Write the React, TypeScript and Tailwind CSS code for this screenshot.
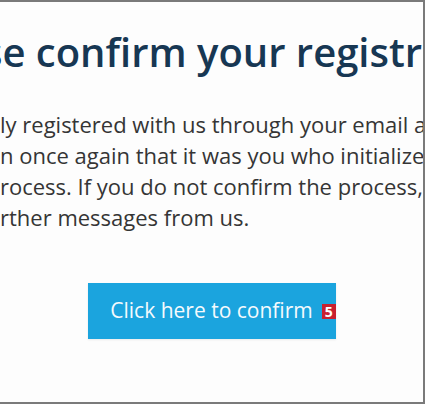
import React from "react";

export default function App() {
  return (
    <div className="w-[425px] h-[404px] overflow-hidden bg-[#fdfdfd] border-t-2 border-r-2 border-b-2 border-[#7a7a7a] flex flex-col" style={{ fontFamily: '"Open Sans", "Noto Sans", sans-serif' }}>
      <div className="flex justify-center overflow-hidden pt-[22px]">
        <h1 className="whitespace-nowrap text-[40px] leading-[56px] font-semibold text-[#173753] shrink-0">
          Please confirm your registration
        </h1>
      </div>
      <p className="mt-[29px] whitespace-nowrap text-[22px] leading-[31px] text-[#353535]">
        ly registered with us through your email address.
        <br />
        n once again that it was you who initialized the
        <br />
        rocess. If you do not confirm the process, you will
        <br />
        rther messages from us.
      </p>
      <div className="flex justify-center mt-[50px]">
        <button className="relative w-[248px] h-[56px] bg-[#1ba4de] text-[#f4fafd] text-[21px] flex items-center justify-center shadow-[0_1px_2px_rgba(0,0,0,0.08)]">
          <span className="relative">
            Click here to confirm
            <span className="absolute left-full ml-[9px] top-[9px] bg-[#c8202f] text-white text-[14px] font-bold w-[14px] h-[15px] flex items-center justify-center leading-none">5</span>
          </span>
        </button>
      </div>
    </div>
  );
}
